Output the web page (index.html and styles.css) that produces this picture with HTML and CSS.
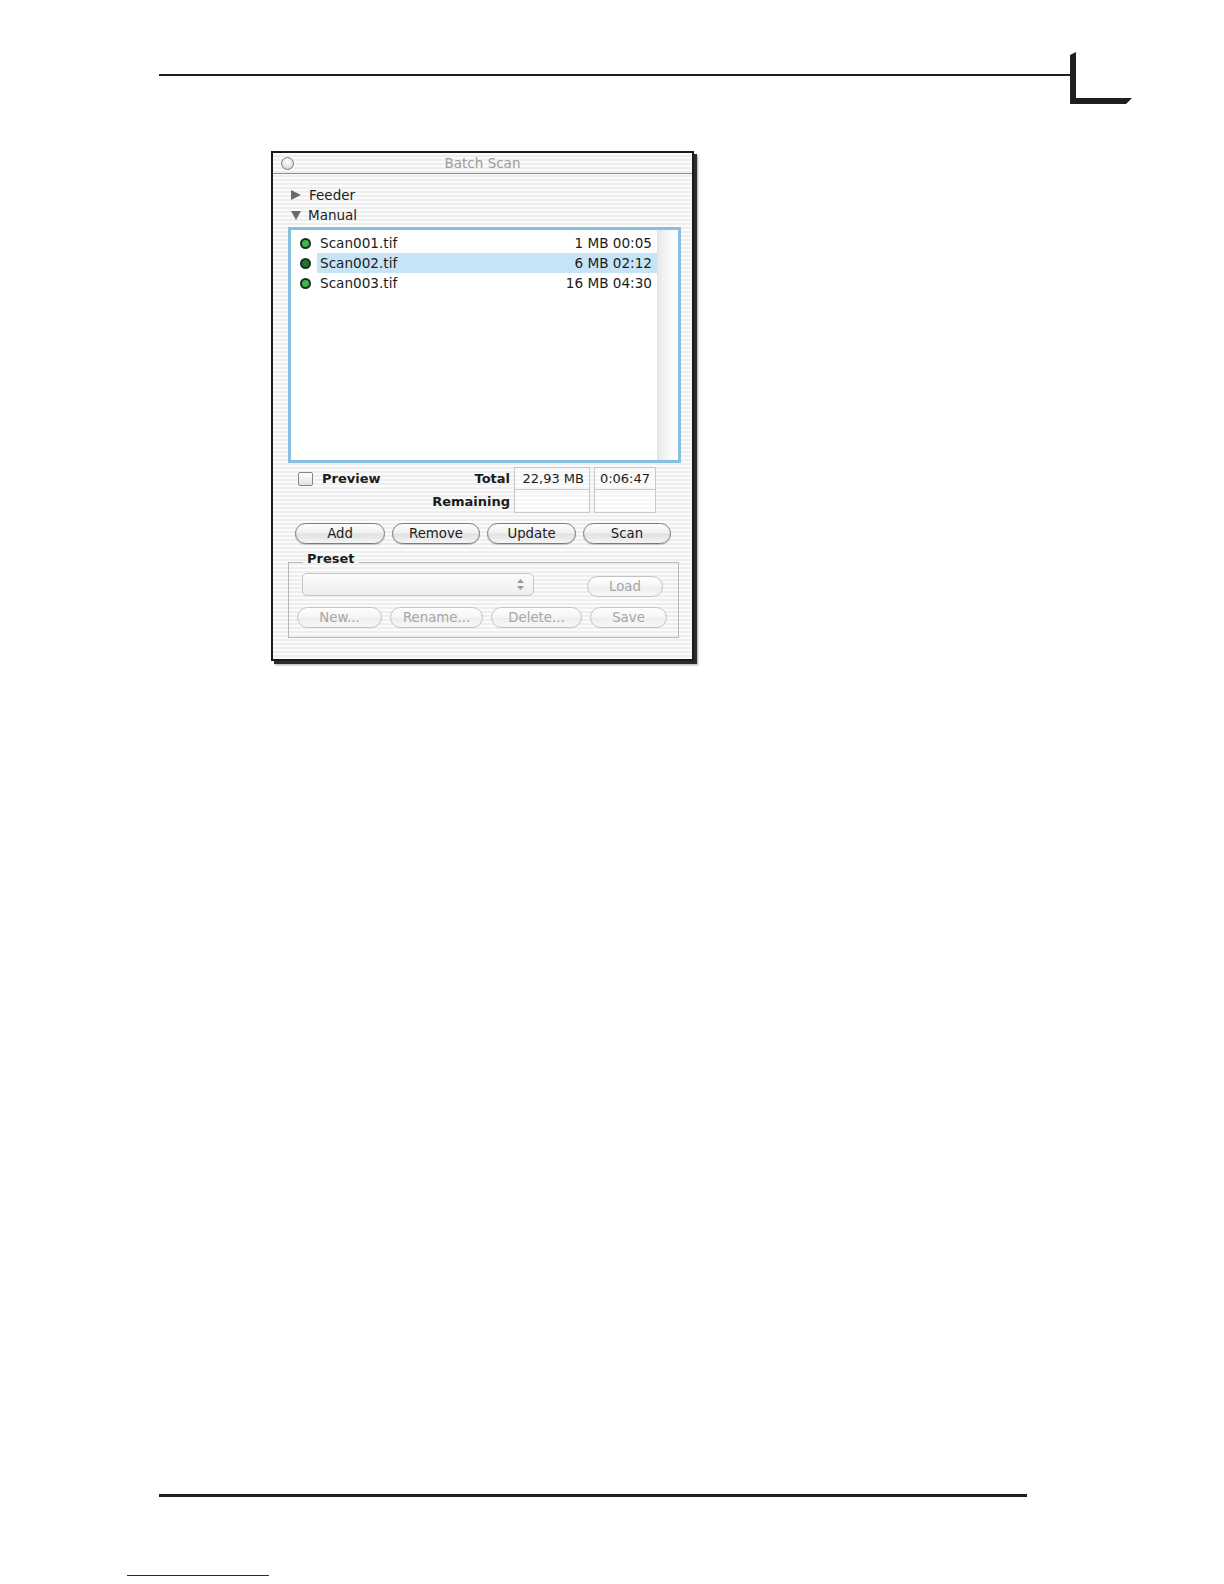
FILE: index.html
```html
<!DOCTYPE html>
<html lang="en">
<head>
<meta charset="utf-8">
<title>Batch Scan</title>
<link rel="stylesheet" href="styles.css">
</head>
<body>
<div class="page">
  <header class="running-head">
    <div class="head-rule"></div>
    <svg class="corner-mark" viewBox="0 0 62 52" width="62" height="52" aria-hidden="true">
      <polygon points="0,3 6,0 6,46 62,46 56,52 0,52" fill="#1f1f1f"/>
    </svg>
  </header>

  <main class="content">
    <div class="window">
      <div class="titlebar">
        <span class="close-btn"></span>
        <span class="title">Batch Scan</span>
        <span></span>
      </div>
      <div class="win-body">
        <div class="disclosure"><span class="tri-right"></span>Feeder</div>
        <div class="disclosure"><span class="tri-down"></span>Manual</div>

        <div class="list-ring">
          <div class="list">
            <div class="rows">
              <div class="row">
                <span class="dot"></span>
                <div class="item"><span>Scan001.tif</span><span>1 MB 00:05</span></div>
              </div>
              <div class="row">
                <span class="dot dot-dark"></span>
                <div class="item selected"><span>Scan002.tif</span><span>6 MB 02:12</span></div>
              </div>
              <div class="row">
                <span class="dot"></span>
                <div class="item"><span>Scan003.tif</span><span>16 MB 04:30</span></div>
              </div>
            </div>
            <div class="track"></div>
          </div>
        </div>

        <div class="stats">
          <div class="stat-label first">
            <span class="check-wrap"><span class="checkbox"></span><b>Preview</b></span>
            <b>Total</b>
          </div>
          <div class="value">22,93 MB</div>
          <div class="value">0:06:47</div>
          <div class="stat-label"><b>Remaining</b></div>
          <div class="value lower"></div>
          <div class="value lower"></div>
        </div>

        <div class="actions">
          <button class="pill w90">Add</button>
          <button class="pill w88">Remove</button>
          <button class="pill w89">Update</button>
          <button class="pill w88">Scan</button>
        </div>

        <fieldset class="preset">
          <legend>Preset</legend>
          <div class="preset-row">
            <div class="popup">
              <svg class="stepper" viewBox="0 0 7 11" width="7" height="11" aria-hidden="true">
                <polygon points="3.5,0 7,4 0,4" fill="#9a9a9a"/>
                <polygon points="0,7 7,7 3.5,11" fill="#9a9a9a"/>
              </svg>
            </div>
            <button class="pill disabled load">Load</button>
          </div>
          <div class="preset-row2">
            <button class="pill disabled w85">New...</button>
            <button class="pill disabled w93">Rename...</button>
            <button class="pill disabled w91">Delete...</button>
            <button class="pill disabled w77">Save</button>
          </div>
        </fieldset>
      </div>
    </div>
  </main>

  <footer class="running-foot">
    <div class="foot-rule"></div>
    <div class="foot-link"></div>
  </footer>
</div>
</body>
</html>
```

FILE: styles.css
```css
* { box-sizing: border-box; }

html, body {
  margin: 0;
  padding: 0;
  background: #ffffff;
}

body {
  font-family: "DejaVu Sans", "Liberation Sans", sans-serif;
  font-size: 13px;
  color: #1c1c1c;
}

.page {
  height: 1584px;
  display: flex;
  flex-direction: column;
}

/* running head */
.running-head {
  display: flex;
  align-items: flex-start;
  padding: 52px 0 0 159px;
}

.head-rule {
  width: 911px;
  height: 2px;
  margin-top: 22px;
  background: #1f1f1f;
}

.corner-mark {
  display: block;
  flex: none;
}

/* window */
.window {
  margin: 47px 0 0 271px;
  width: 423px;
  border: 2px solid #1b1b1b;
  box-shadow: 3px 3px 0 #2b2b2b, 4px 4px 2px rgba(0, 0, 0, 0.35);
  background: repeating-linear-gradient(to bottom, #fbfbfb 0, #fbfbfb 2px, #eeeeee 2px, #eeeeee 4px);
}

.titlebar {
  display: grid;
  grid-template-columns: 1fr auto 1fr;
  align-items: center;
  height: 21px;
  border-bottom: 1px solid #8e8e8e;
}

.close-btn {
  width: 13px;
  height: 13px;
  margin-left: 8px;
  border-radius: 50%;
  border: 1.5px solid #7c7c7c;
  background: radial-gradient(circle at 50% 35%, #ffffff 0, #e2e2e2 60%, #c4c4c4 100%);
}

.title {
  color: #9b9b9b;
  font-size: 13.5px;
  line-height: 20px;
}

.win-body {
  padding: 11px 11px 21px 15px;
}

.disclosure {
  display: flex;
  align-items: center;
  height: 20px;
  padding-left: 3px;
  font-size: 13.5px;
}

.tri-right {
  width: 0;
  height: 0;
  border-left: 10px solid #6a6a6a;
  border-top: 5.5px solid transparent;
  border-bottom: 5.5px solid transparent;
  margin-right: 8px;
}

.tri-down {
  width: 0;
  height: 0;
  border-top: 9px solid #6a6a6a;
  border-left: 5.5px solid transparent;
  border-right: 5.5px solid transparent;
  margin-right: 7px;
}

/* list */
.list-ring {
  margin-top: 2px;
  width: 393px;
  height: 236px;
  border: 3px solid #86bfe0;
  box-shadow: inset 0 0 0 1px #74a6c4;
}

.list {
  display: flex;
  height: 100%;
  background: #ffffff;
}

.rows {
  flex: 1;
  padding-top: 3px;
}

.row {
  display: flex;
  align-items: center;
  height: 20px;
}

.dot {
  flex: none;
  width: 11px;
  height: 11px;
  margin: 0 6px 0 9px;
  border-radius: 50%;
  border: 2px solid #15301b;
  background: #3db44e;
}

.dot-dark {
  background: #2c6e38;
}

.item {
  flex: 1;
  display: flex;
  justify-content: space-between;
  align-items: center;
  height: 20px;
  padding: 0 5px 0 3px;
  font-size: 13.6px;
}

.item.selected {
  background: #c6e4f6;
}

.track {
  width: 21px;
  border-left: 1px solid #e2e2e2;
  background: linear-gradient(to right, #e8e8e8, #f6f6f6 45%, #ffffff);
}

/* stats */
.stats {
  margin-top: 4px;
  display: grid;
  grid-template-columns: 212px 76px 62px;
  grid-template-rows: 23px 23px;
  column-gap: 4px;
  padding-left: 10px;
}

.stat-label {
  display: flex;
  align-items: center;
  justify-content: flex-end;
}

.stat-label.first {
  justify-content: space-between;
}

.check-wrap {
  display: flex;
  align-items: center;
}

.checkbox {
  width: 15px;
  height: 14px;
  margin-right: 9px;
  border: 1px solid #858585;
  border-radius: 2px;
  background: linear-gradient(#ffffff, #e2e2e2);
}

.value {
  border: 1px solid #c8c8c8;
  background: rgba(255, 255, 255, 0.45);
  text-align: right;
  padding-right: 5px;
  line-height: 21px;
}

.value.lower {
  border-top: 0;
}

/* buttons */
.actions {
  margin-top: 10px;
  display: flex;
  gap: 7px;
  padding-left: 7px;
}

.pill {
  height: 21px;
  padding: 0;
  border-radius: 11px;
  border: 1px solid #7b7b7b;
  background: linear-gradient(#fdfdfd 0, #efefef 48%, #e0e0e0 52%, #f5f5f5 100%);
  box-shadow: 0 1px 1px rgba(0, 0, 0, 0.18);
  font-family: "DejaVu Sans", "Liberation Sans", sans-serif;
  font-size: 13.3px;
  line-height: 19px;
  color: #1c1c1c;
  text-align: center;
}

.pill.disabled {
  color: #a6a6a6;
  border-color: #c2c2c2;
  background: linear-gradient(#fefefe 0, #f5f5f5 50%, #ededed 52%, #f8f8f8 100%);
  box-shadow: none;
}

.w77 { width: 77px; }
.w85 { width: 85px; }
.w88 { width: 88px; }
.w89 { width: 89px; }
.w90 { width: 90px; }
.w91 { width: 91px; }
.w93 { width: 93px; }

/* preset group */
.preset {
  margin: 7px 0 0 0;
  padding: 0 0 9px 0;
  width: 391px;
  border: 1px solid #b8b8b8;
  min-width: 0;
}

.preset legend {
  margin-left: 14px;
  padding: 0 4px 6px;
  font-weight: bold;
  line-height: 16px;
}

.preset-row {
  display: flex;
  align-items: flex-end;
  padding-left: 13px;
}

.popup {
  width: 232px;
  height: 23px;
  display: flex;
  align-items: center;
  justify-content: flex-end;
  padding-right: 9px;
  border: 1px solid #c6c6c6;
  border-radius: 5px;
  background: linear-gradient(#fbfbfb, #eeeeee);
}

.stepper {
  display: block;
}

.pill.load {
  width: 76px;
  height: 21px;
  line-height: 19px;
  margin-left: 53px;
  margin-bottom: -1px;
}

.preset-row2 {
  display: flex;
  gap: 8px;
  margin-top: 11px;
  padding-left: 8px;
}

/* running foot */
.running-foot {
  margin-top: auto;
}

.foot-rule {
  margin-left: 159px;
  width: 868px;
  height: 3px;
  background: #1f1f1f;
}

.foot-link {
  margin: 78px 0 8px 127px;
  width: 142px;
  height: 1px;
  background: #1b1b9e;
}
```
